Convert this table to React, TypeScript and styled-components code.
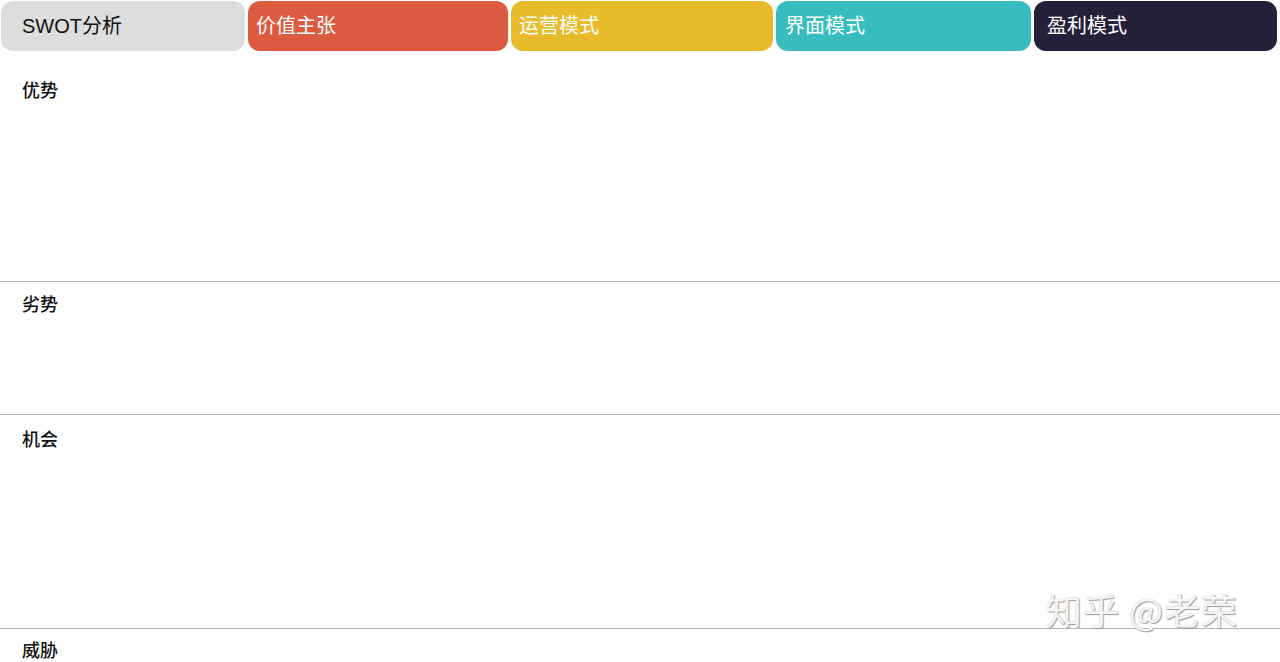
import React from "react";
import styled, { createGlobalStyle } from "styled-components";

const GlobalStyle = createGlobalStyle`
  body {
    margin: 0;
    background: #ffffff;
    font-family: "Liberation Sans", "Noto Sans CJK SC", sans-serif;
  }
`;

const Page = styled.div`
  position: relative;
  width: 1280px;
  height: 662px;
  overflow: hidden;
  background: #ffffff;
`;

const TabBar = styled.div`
  display: flex;
  gap: 3px;
  padding: 1px 0 0 1px;
  height: 50px;
`;

const Tab = styled.div<{ $bg: string; $fg: string; $w: number; $pl: number }>`
  display: flex;
  align-items: center;
  width: ${(p) => p.$w}px;
  height: 50px;
  padding-left: ${(p) => p.$pl}px;
  box-sizing: border-box;
  border-radius: 12px;
  background: ${(p) => p.$bg};
  color: ${(p) => p.$fg};
  font-size: 20px;
  padding-bottom: 4px;
`;

const Section = styled.div<{ $h: number; $top: number; $line: boolean }>`
  height: ${(p) => p.$h}px;
  box-sizing: border-box;
  border-top: ${(p) => (p.$line ? "1px solid #b5b5b5" : "none")};
  padding: ${(p) => p.$top}px 0 0 22px;
`;

const Label = styled.div`
  font-family: "Noto Sans CJK SC", sans-serif;
  font-size: 18px;
  font-weight: 500;
  line-height: 24px;
  color: #111111;
`;

const Watermark = styled.div`
  position: absolute;
  left: 1046px;
  top: 583px;
  font-family: "Noto Sans CJK SC", sans-serif;
  font-size: 36px;
  letter-spacing: 1px;
  color: #f4f4f4;
  text-shadow: 1px 1px 1px #9a9a9a, 0 0 1px #bdbdbd;
  white-space: pre;
`;

const tabs = [
  { text: "SWOT分析", bg: "#dcdddc", fg: "#111111", w: 244, pl: 21 },
  { text: "价值主张", bg: "#dc5a3f", fg: "#ffffff", w: 260, pl: 8 },
  { text: "运营模式", bg: "#e8bb2a", fg: "#ffffff", w: 262, pl: 8 },
  { text: "界面模式", bg: "#39bcbd", fg: "#ffffff", w: 255, pl: 9 },
  { text: "盈利模式", bg: "#25203a", fg: "#ffffff", w: 243, pl: 13 },
];

const sections = [
  { label: "优势", h: 230, top: 26, line: false },
  { label: "劣势", h: 133, top: 9, line: true },
  { label: "机会", h: 214, top: 11, line: true },
  { label: "威胁", h: 40, top: 8, line: true },
];

export default function App() {
  return (
    <Page>
      <GlobalStyle />
      <TabBar>
        {tabs.map((t) => (
          <Tab key={t.text} $bg={t.bg} $fg={t.fg} $w={t.w} $pl={t.pl}>
            {t.text}
          </Tab>
        ))}
      </TabBar>
      {sections.map((s) => (
        <Section key={s.label} $h={s.h} $top={s.top} $line={s.line}>
          <Label>{s.label}</Label>
        </Section>
      ))}
      <Watermark>知乎 @老荣</Watermark>
    </Page>
  );
}
